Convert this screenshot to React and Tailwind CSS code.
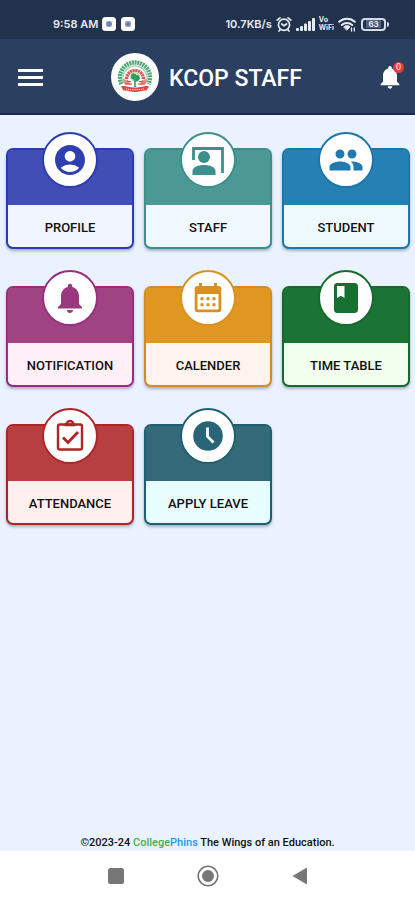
import { MdAccountCircle, MdPeople, MdNotifications, MdBook } from 'react-icons/md'

const TILES = [
  { label: 'PROFILE', icon: MdAccountCircle, box: 'border-[#2c3cb0] bg-[#f0f5ff]', top: 'bg-[#404eb5]', ring: 'border-[#2c3cb0] text-[#303fb0]' },
  { label: 'STAFF', icon: StaffIcon, box: 'border-[#3c8f8a] bg-[#f0f9ff]', top: 'bg-[#4c9894]', ring: 'border-[#3c8f8a] text-[#3c8f8a]' },
  { label: 'STUDENT', icon: MdPeople, box: 'border-[#1b76ad] bg-[#edf9ff]', top: 'bg-[#2580b3]', ring: 'border-[#1b76ad] text-[#1f7ab0]' },
  { label: 'NOTIFICATION', icon: MdNotifications, box: 'border-[#97307c] bg-[#fff0f8]', top: 'bg-[#a04382]', ring: 'border-[#97307c] text-[#9a3980]' },
  { label: 'CALENDER', icon: CalendarIcon, box: 'border-[#d48c22] bg-[#fff3f0]', top: 'bg-[#e09722]', ring: 'border-[#d9901f] text-[#d9901f]' },
  { label: 'TIME TABLE', icon: MdBook, box: 'border-[#146b2c] bg-[#f0ffee]', top: 'bg-[#1b7435]', ring: 'border-[#146b2c] text-[#17702f]' },
  { label: 'ATTENDANCE', icon: AttendanceIcon, box: 'border-[#b02327] bg-[#fff0f0]', top: 'bg-[#b73f41]', ring: 'border-[#b02327] text-[#b02327]' },
  { label: 'APPLY LEAVE', icon: ClockIcon, box: 'border-[#1f6070] bg-[#e8fdff]', top: 'bg-[#356a7b]', ring: 'border-[#1f6070] text-[#2a6577]' },
]

function StaffIcon({ size }) {
  return (
    <svg viewBox="0 0 36 36" width={size} height={size} aria-hidden="true">
      <path d="M3.500 18V6.500h29V31" fill="none" stroke="currentColor" strokeWidth="2.800" />
      <circle cx="14" cy="15" r="6" fill="currentColor" />
      <path d="M2.500 33v-4c0-4 6-6 11.500-6s11.500 2 11.500 6v4z" fill="currentColor" />
    </svg>
  )
}

function CalendarIcon({ size }) {
  return (
    <svg viewBox="0 0 36 36" width={size} height={size} aria-hidden="true">
      <path d="M9 3h3v3h12V3h3v3h1.500A2.800 2.800 0 0 1 31.300 9v20.500a2.800 2.800 0 0 1-2.800 2.800h-21a2.800 2.800 0 0 1-2.800-2.800V9A2.800 2.800 0 0 1 7.500 6H9zM7.500 14v15.500h21V14z" fill="currentColor" fillRule="evenodd" />
      <path d="M10.500 18.800h3M16.500 18.800h3M22.500 18.800h3M10.500 24.800h3M16.500 24.800h3M22.500 24.800h3" stroke="currentColor" strokeWidth="3" />
    </svg>
  )
}

function AttendanceIcon({ size }) {
  return (
    <svg viewBox="0 0 36 36" width={size} height={size} fill="none" stroke="currentColor" strokeWidth="2.400" aria-hidden="true">
      <rect x="6" y="6.500" width="24" height="25" rx="1.800" />
      <path d="M14.500 6.500a3.500 3.500 0 0 1 7 0" />
      <path d="M12.500 6.800h11" strokeWidth="3" />
      <path d="m11 19.500 5 5 10-10.500" strokeWidth="2.800" />
    </svg>
  )
}

function ClockIcon({ size }) {
  return (
    <svg viewBox="0 0 36 36" width={size} height={size} aria-hidden="true">
      <circle cx="18" cy="18" r="14.800" fill="currentColor" />
      <path d="M17.500 9.500v9l6 6" fill="none" stroke="#fff" strokeWidth="2.800" />
    </svg>
  )
}

function AppBadge() {
  return (
    <svg viewBox="0 0 14 14" className="h-[14px] w-[14px]" aria-hidden="true">
      <rect width="14" height="14" rx="3.500" fill="#fff" />
      <rect x="4" y="4" width="6" height="6" rx="2" fill="#8b9dc0" />
      <path d="M5 7h4M7 5v4" stroke="#5870a0" strokeWidth="1" />
    </svg>
  )
}

function AlarmIcon() {
  return (
    <svg viewBox="0 0 16 16" className="h-4 w-4" fill="none" stroke="#e6ebf3" strokeWidth="1.700" strokeLinecap="round" aria-hidden="true">
      <circle cx="8" cy="8.800" r="5.600" />
      <path d="M1.200 4.200 4 1.800M14.800 4.200 12 1.800M4.200 13.600 3 15M11.800 13.600 13 15M5.800 8 8 9.800 10.600 8" />
    </svg>
  )
}

function SignalIcon() {
  return (
    <svg viewBox="0 0 19 13" className="h-[13px] w-[19px]" fill="#e6ebf3" aria-hidden="true">
      <rect x="0" y="10" width="3" height="3" rx="1" />
      <rect x="4" y="8" width="3" height="5" rx="1" />
      <rect x="8" y="5.500" width="3" height="7.500" rx="1" />
      <rect x="12" y="3" width="3" height="10" rx="1" />
      <rect x="16" y="0" width="3" height="13" rx="1" />
    </svg>
  )
}

function WifiIcon() {
  return (
    <svg viewBox="0 0 18 15" className="h-[15px] w-[18px]" fill="none" stroke="#e6ebf3" strokeWidth="2" strokeLinecap="round" aria-hidden="true">
      <path d="M1.200 4.800C5.500 .6 12.500 .6 16.800 4.800M3.800 8C6.800 5.200 11.200 5.200 14.200 8" />
      <path d="M6 9.800c1.800-1.600 4.200-1.600 6 0L9 13z" fill="#e6ebf3" strokeWidth="1" />
      <path d="M13.500 14v-3M16.300 11v3" strokeWidth="1.300" />
    </svg>
  )
}

function StatusBar() {
  return (
    <div className="flex h-[39px] items-end justify-between bg-[#22324c] pr-[26px] pb-[7px] pl-[53px] font-['Inter',sans-serif] text-[11px] leading-4 font-semibold text-[#e6ebf3]">
      <div className="flex items-center gap-1">
        <span>9:58 AM</span>
        <AppBadge />
        <span className="pl-px"><AppBadge /></span>
      </div>
      <div className="flex items-center gap-1">
        <span>10.7KB/s</span>
        <AlarmIcon />
        <SignalIcon />
        <span className="flex flex-col text-[7px] leading-[8px] font-bold">
          <span>Vo</span>
          <span>WiFi</span>
        </span>
        <WifiIcon />
        <div className="flex items-center gap-px pl-px">
          <div className="flex h-[13px] w-[25px] items-center justify-center rounded-[4px] border-2 border-[#d5dbe6]">
            <span className="bg-[#52617b] px-0.5 text-[8px] leading-[8px]">63</span>
          </div>
          <div className="h-[5px] w-[2px] rounded-r bg-[#d5dbe6]" />
        </div>
      </div>
    </div>
  )
}

function Logo() {
  return (
    <svg viewBox="0 0 48 48" className="h-12 w-12" role="img" aria-label="College logo">
      <circle cx="24" cy="24" r="24" fill="#fff" />
      <path d="M10.500 31A15 15 0 1 1 37.500 31" fill="none" stroke="#4da878" strokeWidth="4.500" strokeDasharray="2 .7" />
      <path d="M12.800 29.500A12 12 0 1 1 35.200 29.500" fill="none" stroke="#9bd0b1" strokeWidth="1.200" />
      <path d="M15.500 26A8.500 8.500 0 0 1 32.500 26" fill="none" stroke="#e0574f" strokeWidth="3.400" strokeDasharray="2.200 .5" />
      <path d="M12 26l5 1 3 5-7-1zM36 26l-5 1-3 5 7-1z" fill="#ea8c84" />
      <path d="M14 31h7M27 31h7M16 28.500h4M28 28.500h4" stroke="#d94840" strokeWidth="1.200" />
      <circle cx="24" cy="24" r="5" fill="#bfe3c4" />
      <path d="M24 34V21M24 26c-3 0-4-2-3-4 2-2 3 0 3 2M24 28c4 0 5-3 3-5-2-1-3 1-3 3" fill="#2f9e5c" stroke="#2f9e5c" strokeWidth="1.600" />
      <path d="M10 33.500c4-1.500 6 1 14 1s10-2.500 14-1l-2.500 4c-4-.500-6 1.500-11.500 1.500s-7.500-2-11.500-1.500z" fill="#dc4a42" />
      <path d="M15 35.800c5 1.400 13 1.400 18 0" fill="none" stroke="#fff" strokeWidth=".9" strokeDasharray="1.200 .9" />
    </svg>
  )
}

function Header() {
  return (
    <header className="flex h-[76px] items-center justify-between border-b-2 border-[#1a2b52] bg-[#2b4060] pt-0.5 pr-[11px] pl-[18px]">
      <button type="button" aria-label="Menu" className="flex w-[25px] flex-col gap-1">
        <span className="h-[3px] w-full bg-white" />
        <span className="h-[3px] w-full bg-white" />
        <span className="h-[3px] w-full bg-white" />
      </button>
      <div className="flex items-center gap-2.5 pr-1.5">
        <Logo />
        <h1 className="pt-1 text-[23px] leading-7 font-medium text-white">KCOP STAFF</h1>
      </div>
      <button type="button" aria-label="Notifications" className="relative text-white">
        <MdNotifications size={28} />
        <span className="absolute -top-px right-0 flex h-[11px] w-[11px] items-center justify-center rounded-full bg-[#ee3a35] text-[9px] leading-none">0</span>
      </button>
    </header>
  )
}

function Tile({ label, icon: Icon, box, top, ring }) {
  return (
    <button type="button" className={`relative flex flex-col rounded-[7px] border-2 shadow-[0_2px_3px_rgba(60,80,110,0.4)] ${box}`}>
      <span className={`h-[55px] w-full rounded-t-[4px] ${top}`} />
      <span className="flex h-[42px] w-full items-center justify-center pt-1 text-[13px] leading-4 font-medium text-[#111]">{label}</span>
      <span className={`absolute -top-[18px] left-1/2 flex h-14 w-14 -translate-x-1/2 items-center justify-center rounded-full border-2 bg-white ${ring}`}>
        <Icon size={36} />
      </span>
    </button>
  )
}

function NavBar() {
  return (
    <nav className="flex h-[49px] items-center justify-between bg-white px-[106px]">
      <button type="button" aria-label="Recent apps">
        <svg viewBox="0 0 20 20" className="h-5 w-5"><rect x="2" y="2" width="16" height="16" rx="2.500" fill="#777" /></svg>
      </button>
      <button type="button" aria-label="Home">
        <svg viewBox="0 0 22 22" className="h-[22px] w-[22px]">
          <circle cx="11" cy="11" r="9.800" fill="none" stroke="#777" strokeWidth="1.600" />
          <circle cx="11" cy="11" r="6" fill="#777" />
        </svg>
      </button>
      <button type="button" aria-label="Back">
        <svg viewBox="0 0 20 20" className="h-5 w-5"><path d="M3.500 10 18 1.500v17z" fill="#777" /></svg>
      </button>
    </nav>
  )
}

export default function App() {
  return (
    <div className="flex min-h-screen flex-col bg-[#eaf2ff] font-['Roboto',sans-serif]">
      <StatusBar />
      <Header />
      <main className="grid flex-1 grid-cols-3 content-start gap-x-2.5 gap-y-[37px] pt-[33px] pr-[5px] pl-1.5">
        {TILES.map((tile) => <Tile key={tile.label} {...tile} />)}
      </main>
      <footer className="pb-0.5 text-center text-[11px] leading-3 font-medium text-[#111]">
        ©2023-24 <span className="text-[#4caf50]">College</span><span className="text-[#2196f3]">Phins</span> The Wings of an Education.
      </footer>
      <NavBar />
    </div>
  )
}
